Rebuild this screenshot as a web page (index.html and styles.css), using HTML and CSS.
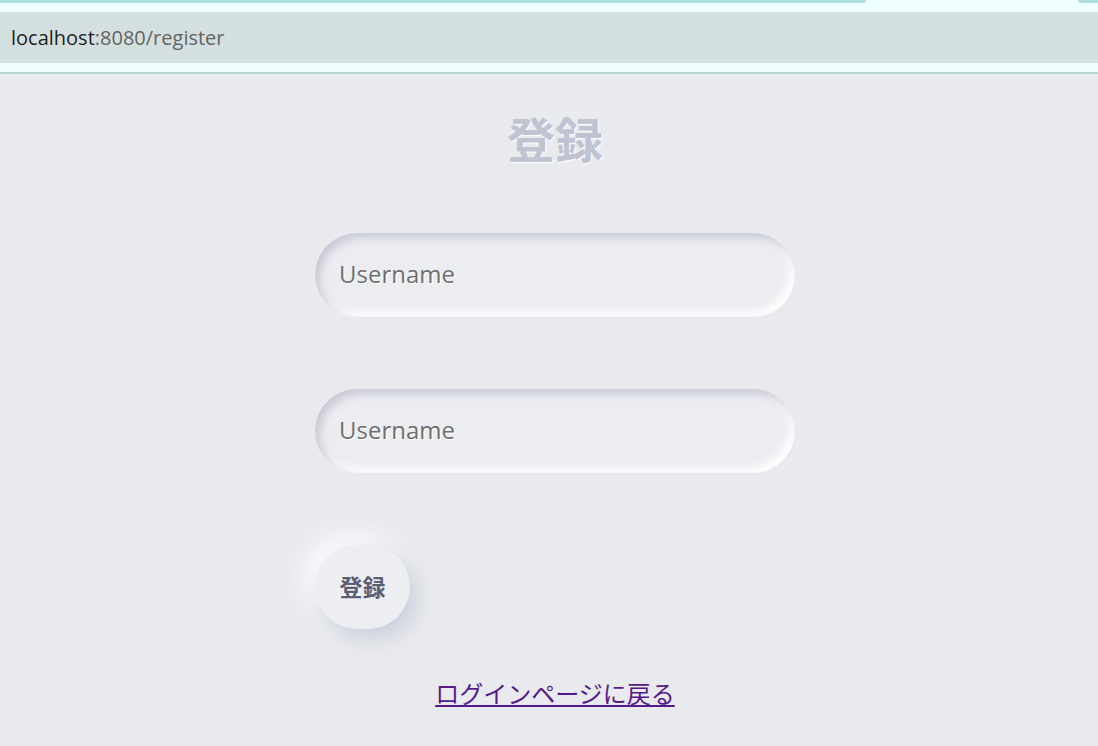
FILE: index.html
```html
<!DOCTYPE html>
<html lang="ja">
<head>
<meta charset="utf-8">
<title>登録</title>
<link rel="stylesheet" href="styles.css">
</head>
<body>
<div class="chrome">
  <div class="tabs">
    <div class="tab tab-left"></div>
    <div class="tab-gap"></div>
    <div class="tab tab-right"></div>
  </div>
  <div class="address"><span class="host">localhost</span><span class="path">:8080/register</span></div>
  <div class="chrome-bottom"></div>
</div>
<main class="page">
  <h1 class="title">登録</h1>
  <form class="form">
    <input class="field" type="text" placeholder="Username">
    <input class="field" type="password" placeholder="Username">
    <button class="btn" type="button">登録</button>
  </form>
  <a class="back" href="#">ログインページに戻る</a>
</main>
</body>
</html>
```
FILE: styles.css
```css
* { box-sizing: border-box; }
html, body { margin: 0; padding: 0; }
body {
  background: #e9eaee;
  font-family: "Open Sans", "Noto Sans CJK JP", sans-serif;
  width: 1098px;
  height: 746px;
  overflow: hidden;
}
.chrome { background: #efffff; }
.tabs { display: flex; height: 12px; }
.tab { height: 3px; background: #b0dedd; }
.tab-left { width: 866px; border-bottom-right-radius: 8px; }
.tab-gap { flex: 1; }
.tab-right { width: 20px; border-bottom-left-radius: 8px; }
.address {
  height: 51px;
  background: #d4e0e0;
  display: flex;
  align-items: center;
  padding-left: 11px;
  font-family: "Open Sans", sans-serif;
  font-size: 20px;
}
.host { color: #1f1f1f; }
.path { color: #646464; }
.chrome-bottom { height: 11px; border-bottom: 2px solid #b6d4cf; }
.page {
  display: flex;
  flex-direction: column;
  align-items: center;
  padding-left: 12px;
}
.title {
  margin: 34px 0 0;
  font-family: "Noto Sans CJK JP", sans-serif;
  font-size: 48px;
  font-weight: 700;
  line-height: 58px;
  color: #c0c3d1;
  text-shadow: 1px 1px 1px #ffffff;
}
.form {
  width: 480px;
  margin-top: 67px;
  display: flex;
  flex-direction: column;
  align-items: flex-start;
  gap: 72px;
}
.field {
  width: 480px;
  height: 84px;
  border: none;
  outline: none;
  border-radius: 42px;
  background: #ecedf1;
  padding: 0 24px 4px;
  font-family: "Open Sans", sans-serif;
  font-size: 24px;
  color: #555;
  box-shadow: inset 5px 5px 8px #c9cad6, inset -5px -5px 8px #ffffff;
}
.field::placeholder { color: #6f6f6f; text-shadow: 1px 1px 0 #fff; }
.btn {
  width: 95px;
  height: 84px;
  border: none;
  border-radius: 42px;
  background: #eceef2;
  font-family: "Noto Sans CJK JP", sans-serif;
  font-weight: 700;
  font-size: 23px;
  color: #5a5f73;
  box-shadow: 8px 10px 20px #ccd0dc, -10px -10px 24px #fafbfd;
  padding: 0 0 2px;
}
.back {
  margin-top: 47px;
  font-family: "Noto Sans CJK JP", sans-serif;
  font-size: 24px;
  line-height: 34px;
  color: #551a8b;
  text-decoration: underline;
  font-weight: 400;
}
```
